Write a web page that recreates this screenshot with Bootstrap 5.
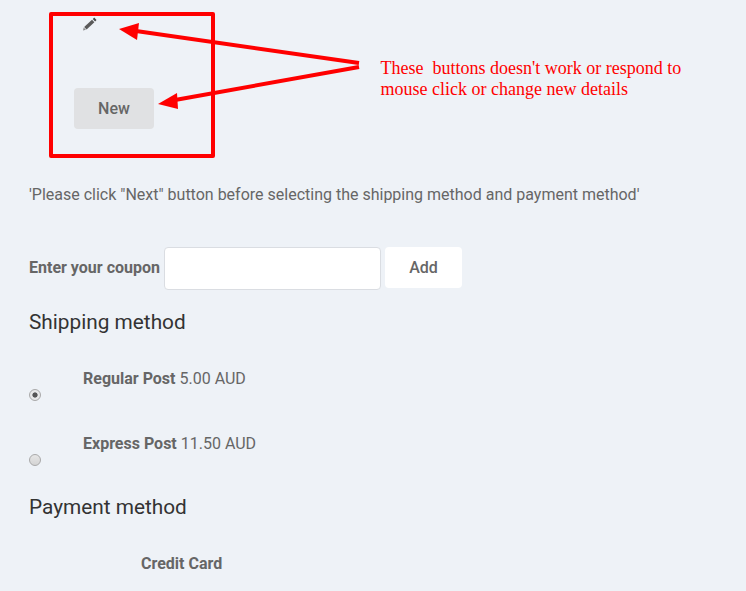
<!DOCTYPE html>
<html lang="en">
<head>
  <meta charset="UTF-8" />
  <title>Checkout</title>
  <meta name="viewport" content="width=device-width, initial-scale=1" />
  <link href="https://cdn.jsdelivr.net/npm/bootstrap@5.3.3/dist/css/bootstrap.min.css" rel="stylesheet" />
  <style>
    html, body { height: 591px; overflow: hidden; }
    body {
      background-color: #eef2f7;
      font-family: Roboto, "Liberation Sans", sans-serif;
      font-size: 16px;
      color: #666;
      position: relative;
    }
    .page-wrap { padding: 0 0 0 29px; }
    .edit-area { height: 130px; padding-left: 45px; padding-top: 17px; }
    .edit-pencil { display: block; margin-left: 8px; }
    .new-btn {
      display: block;
      width: 80px;
      height: 41px;
      margin-top: 57px;
      background-color: #e0e1e3;
      border: 0;
      border-radius: 4px;
      color: #666;
      font-weight: 500;
      font-size: 16px;
    }
    .note-line { margin: 55px 0 0; line-height: 20px; }
    .coupon-row { margin-top: 42px; height: 43px; }
    .coupon-label { font-weight: 700; width: 135px; margin-bottom: 2px; white-space: nowrap; font-size: 16px; color: #666; }
    .coupon-input {
      width: 217px;
      height: 43px;
      background: #fff;
      border: 1px solid #dadde2;
      border-radius: 4px;
    }
    .add-btn {
      width: 77px;
      height: 41px;
      margin-left: 4px;
      background: #fff;
      border: 0;
      border-radius: 4px;
      color: #666;
      font-weight: 500;
      font-size: 16px;
      align-self: flex-start;
    }
    .sect-title { font-size: 20.8px; font-weight: 400; color: #333; line-height: 26px; margin: 0; }
    .ship-title { margin-top: 19px; }
    .pay-title { margin-top: 27px; }
    .ship-opt { height: 33px; }
    .ship-opt-first { margin-top: 34px; margin-bottom: 32px; }
    .ship-text { padding-left: 54px; line-height: 20px; }
    .ship-text b { font-weight: 700; }
    .fake-radio {
      display: block;
      width: 12px;
      height: 12px;
      border-radius: 50%;
      border: 1px solid #a9a9a9;
      background: linear-gradient(#e6e6e6, #d4d4d4);
    }
    .fake-radio.is-on {
      background: radial-gradient(circle, #555 0 2.2px, #e8e8e8 3px);
    }
    .card-label { font-weight: 700; padding-left: 112px; margin-top: 34px; line-height: 20px; }
    .mark-box {
      position: absolute;
      left: 49px;
      top: 12px;
      width: 166px;
      height: 146px;
      border: 4px solid #f00;
      border-radius: 2px;
      pointer-events: none;
    }
    .mark-arrows { position: absolute; left: 0; top: 0; pointer-events: none; }
    .mark-note {
      position: absolute;
      left: 380.5px;
      top: 58px;
      width: 340px;
      font-family: "Liberation Serif", serif;
      font-size: 18px;
      line-height: 21px;
      color: #f00;
      white-space: pre-wrap;
    }
  </style>
</head>
<body>
  <div class="page-wrap">
    <div class="edit-area">
      <svg class="edit-pencil" width="15" height="14" viewBox="0 0 15 14">
        <path d="M1 13.6 L1.7 10.6 L3.9 12.8 Z" fill="#888" />
        <path d="M2.2 10 L10 2.8 L12.4 5.2 L4.6 12.4 Z" fill="#5a5a5a" />
        <path d="M10.8 2 L12.2 0.6 L14.5 2.9 L13.1 4.4 Z" fill="#444" />
      </svg>
      <button type="button" class="new-btn">New</button>
    </div>

    <p class="note-line">'Please click "Next" button before selecting the shipping method and payment method'</p>

    <div class="coupon-row d-flex align-items-center">
      <label class="coupon-label" for="coupon">Enter your coupon</label>
      <input type="text" id="coupon" class="coupon-input" />
      <button type="button" class="add-btn">Add</button>
    </div>

    <h5 class="sect-title ship-title">Shipping method</h5>

    <div class="ship-opt ship-opt-first">
      <div class="ship-text"><b>Regular Post</b> 5.00 AUD</div>
      <span class="fake-radio is-on"></span>
    </div>
    <div class="ship-opt">
      <div class="ship-text"><b>Express Post</b> 11.50 AUD</div>
      <span class="fake-radio"></span>
    </div>

    <h5 class="sect-title pay-title">Payment method</h5>
    <div class="card-label">Credit Card</div>
  </div>

  <!-- annotations on top of the screenshot -->
  <div class="mark-box"></div>
  <svg class="mark-arrows" width="746" height="591">
    <line x1="359" y1="63" x2="136" y2="31" stroke="#f00" stroke-width="4" />
    <polygon points="119,29 139,23 137,40" fill="#f00" />
    <line x1="359" y1="67" x2="175" y2="100" stroke="#f00" stroke-width="4" />
    <polygon points="158,104 177,93 178,109" fill="#f00" />
  </svg>
  <div class="mark-note">These  buttons doesn't work or respond to
mouse click or change new details</div>

  <script src="https://cdn.jsdelivr.net/npm/bootstrap@5.3.3/dist/js/bootstrap.bundle.min.js"></script>
</body>
</html>
